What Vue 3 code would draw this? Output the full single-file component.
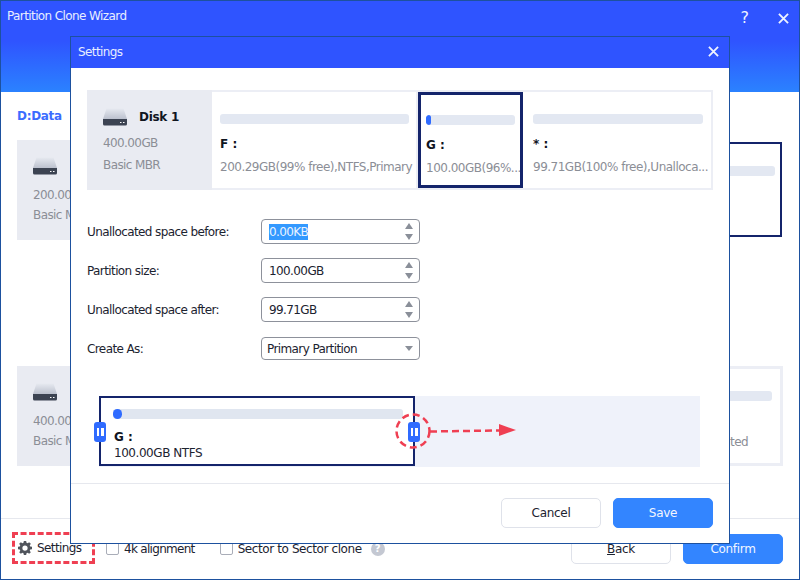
<script setup>
const fields = [
  { label: 'Unallocated space before:', value: '0.00KB', selected: true },
  { label: 'Partition size:', value: '100.00GB' },
  { label: 'Unallocated space after:', value: '99.71GB' },
]
</script>

<template>
  <div class="app">
    <header class="app-head">
      <span class="app-title">Partition Clone Wizard</span>
      <span class="head-icons">
        <span class="help">?</span>
        <svg class="x" width="11" height="11" viewBox="0 0 12 12"><path d="M1 1l10 10M11 1L1 11" /></svg>
      </span>
    </header>
    <main class="app-body">
      <div class="crumb">D:Data</div>
      <div class="bg-row first">
        <div class="bg-disk">
          <svg class="hdd" width="24" height="18" viewBox="0 0 24 18"><use href="#hdd-shape" /></svg>
          <div class="muted size">200.00GB</div>
          <div class="muted kind">Basic MBR</div>
        </div>
        <div class="bg-selected"><div class="bg-bar"></div></div>
      </div>
      <div class="bg-row second">
        <div class="bg-disk">
          <svg class="hdd" width="24" height="18" viewBox="0 0 24 18"><use href="#hdd-shape" /></svg>
          <div class="muted size">400.00GB</div>
          <div class="muted kind">Basic MBR</div>
        </div>
        <div class="bg-plain">
          <div class="bg-bar"></div>
          <div class="muted bg-tail">Unallocated</div>
        </div>
      </div>
    </main>
    <footer class="app-foot">
      <div class="settings-link">
        <svg width="14" height="14" viewBox="0 0 24 24"><path fill="#50545c" fill-rule="evenodd" d="M10 1h4l.6 3.1 1.9.8L19.1 3 22 5.900l-1.900 2.600.8 1.900L24 11v4l-3.100.6-.8 1.900 1.900 2.600L19.100 23l-2.600-1.900-1.900.8L14 25h-4l-.6-3.100-1.900-.8L4.900 23 2 20.100l1.900-2.600-.8-1.900L0 15v-4l3.100-.6.8-1.900L2 5.900 4.900 3l2.600 1.900 1.900-.8zM12 8.500a4.500 4.500 0 1 0 0 9 4.500 4.500 0 0 0 0-9z" transform="translate(0 -1)"/></svg>
        <span>Settings</span>
      </div>
      <label class="check"><i></i>4k alignment</label>
      <label class="check sector"><i></i>Sector to Sector clone</label>
      <span class="q">?</span>
      <span class="grow"></span>
      <button class="btn"><u>B</u>ack</button>
      <button class="btn primary">Confirm</button>
    </footer>

    <section class="dialog">
      <header class="dlg-head">
        <span>Settings</span>
        <svg class="x" width="11" height="11" viewBox="0 0 12 12"><path d="M1 1l10 10M11 1L1 11" /></svg>
      </header>
      <div class="dlg-body">
        <div class="disk-row">
          <div class="disk-info">
            <div class="disk-name">
              <svg width="24" height="18" viewBox="0 0 24 18">
                <defs>
                  <linearGradient id="hdd-top" x1="0" y1="0" x2="0" y2="1">
                    <stop offset="0" stop-color="#e6e9f0" />
                    <stop offset="1" stop-color="#bcc1ce" />
                  </linearGradient>
                </defs>
                <g id="hdd-shape">
                  <path d="M3.500 0.500h17L24 11H0z" fill="url(#hdd-top)" />
                  <path d="M0 11h24v5a1.500 1.500 0 0 1-1.500 1.500h-21A1.500 1.500 0 0 1 0 16z" fill="#3c4352" />
                  <path d="M17 14h1.500v1H17zM20 14h1.500v1H20z" fill="#fff" />
                </g>
              </svg>
              <b>Disk 1</b>
            </div>
            <div class="muted info-size">400.00GB</div>
            <div class="muted info-kind">Basic MBR</div>
          </div>
          <div class="cell f">
            <div class="bar"></div>
            <b class="letter">F :</b>
            <div class="muted desc">200.29GB(99% free),NTFS,Primary</div>
          </div>
          <div class="cell g">
            <div class="bar"><span class="fill"></span></div>
            <b class="letter">G :</b>
            <div class="muted desc">100.00GB(96%...</div>
          </div>
          <div class="cell u">
            <div class="bar"></div>
            <b class="letter">* :</b>
            <div class="muted desc">99.71GB(100% free),Unalloca...</div>
          </div>
        </div>

        <div class="form">
          <div v-for="f in fields" :key="f.label" class="form-row">
            <span class="form-label">{{ f.label }}</span>
            <div class="spin">
              <span :class="{ sel: f.selected }">{{ f.value }}</span>
              <span class="arrows"><i class="up"></i><i class="down"></i></span>
            </div>
          </div>
          <div class="form-row last">
            <span class="form-label">Create As:</span>
            <div class="select">
              <span>Primary Partition</span>
              <i class="down small"></i>
            </div>
          </div>
        </div>

        <div class="slider">
          <div class="part">
            <span class="grip left"><i></i><i></i></span>
            <div class="part-bar"><span class="part-fill"></span></div>
            <b class="part-letter">G :</b>
            <div class="part-text">100.00GB NTFS</div>
            <span class="grip right"><i></i><i></i></span>
          </div>
          <svg class="annot" width="130" height="50" viewBox="0 0 130 50">
            <circle cx="25" cy="25" r="16.500" />
            <path d="M42 25.500L112 24.500" />
            <polygon points="111,18 128,24 111,30" />
          </svg>
        </div>
      </div>
      <footer class="dlg-foot">
        <button class="btn">Cancel</button>
        <button class="btn primary">Save</button>
      </footer>
    </section>
  </div>
</template>

<style>
html, body { margin: 0; background: #fff; }
</style>

<style scoped>
.app {
  position: relative;
  width: 800px;
  height: 580px;
  box-sizing: border-box;
  border: 1px solid #1d519f;
  display: flex;
  flex-direction: column;
  overflow: hidden;
  background: #fff;
  color: #1c2330;
  font: 12px/16px "DejaVu Sans", sans-serif;
  letter-spacing: -0.6px;
}
b { font-weight: 700; }
.muted { color: #8b8e96; }
.x path { stroke: #eef3ff; stroke-width: 2; fill: none; }

.app-head {
  height: 91px;
  flex: none;
  box-sizing: border-box;
  padding: 7px 10px 0 6px;
  display: flex;
  justify-content: space-between;
  align-items: flex-start;
  background: linear-gradient(#2f54ff 0, #2f54ff 40px, #2b82ff 91px);
  color: #e8eeff;
}
.head-icons { display: flex; align-items: center; gap: 29px; margin-top: 2px; }
.help { font-size: 16px; color: #eef3ff; letter-spacing: 0; }

.app-body { flex: 1; padding: 0 16px; position: relative; }
.crumb { color: #3b6cff; font-weight: 700; margin-top: 16px; height: 32px; letter-spacing: -0.3px; }
.bg-row {
  height: 100px;
  display: flex;
  justify-content: space-between;
  box-sizing: border-box;
  background: #fff;
}
.second { margin-top: 126px; }
.bg-disk {
  width: 125px;
  background: #e9ebf2;
  padding: 17px 0 0 16px;
  box-sizing: border-box;
}
.hdd { display: block; }
.size { margin-top: 12px; }
.kind { margin-top: 4px; }
.bg-selected {
  width: 140px;
  height: 95px;
  margin: 2px 1px 0 0;
  box-sizing: border-box;
  border: 2px solid #14246b;
  padding: 22px 5px 0 10px;
}
.bg-plain {
  width: 140px;
  box-sizing: border-box;
  border: 3px solid #eceef5;
  padding: 22px 8px 0 10px;
  display: flex;
  flex-direction: column;
  align-items: flex-end;
}
.bg-bar { height: 10px; width: 100%; background: #e3e8f2; border-radius: 3px; }
.bg-tail { margin-top: 33px; margin-right: 24px; }

.app-foot {
  height: 61px;
  flex: none;
  box-sizing: border-box;
  border-top: 1px solid #e6e8ee;
  display: flex;
  align-items: center;
  padding: 0 16px 0 11px;
}
.settings-link {
  width: 83px;
  height: 32px;
  box-sizing: border-box;
  border: 3px dashed #ef3f52;
  display: flex;
  align-items: center;
  gap: 5px;
  padding-left: 3px;
  margin: -2px 11px 0 0;
}
.check { display: flex; align-items: center; gap: 5px; margin: -1px 25px 0 0; letter-spacing: -0.7px; }
.check i {
  width: 13px;
  height: 13px;
  box-sizing: border-box;
  border: 1px solid #a9adb8;
  border-radius: 2px;
}
.check.sector { margin-right: 9px; letter-spacing: -0.4px; }
.q {
  width: 14px;
  height: 14px;
  border-radius: 50%;
  background: #c4c8d2;
  color: #fff;
  font-size: 10px;
  font-weight: 700;
  line-height: 14px;
  text-align: center;
  letter-spacing: 0;
}
.grow { flex: 1; }
.btn {
  width: 100px;
  height: 30px;
  font: inherit;
  letter-spacing: -0.3px;
  color: #1c2330;
  background: #fff;
  border: 1px solid #dfe2ea;
  border-radius: 5px;
  margin: 0 0 0 12px;
  padding: 0;
}
.btn.primary { background: #3385ff; border-color: #3385ff; color: #f2f6ff; }

.dialog {
  position: absolute;
  left: 69px;
  top: 35px;
  width: 660px;
  height: 508px;
  box-sizing: border-box;
  border: 1px solid #1d519f;
  background: #fff;
  display: flex;
  flex-direction: column;
}
.dlg-head {
  height: 31px;
  flex: none;
  background: #2f54ff;
  color: #e8eeff;
  display: flex;
  justify-content: space-between;
  align-items: center;
  padding: 0 10px 2px 7px;
  box-sizing: border-box;
}
.dlg-body { flex: 1; padding: 22px 16px 0; box-sizing: border-box; }
.disk-row {
  height: 100px;
  display: flex;
  box-sizing: border-box;
  border: 2px solid #eceef5;
  border-left: 0;
}
.disk-info {
  width: 125px;
  flex: none;
  margin: -2px 0;
  background: #e9ebf2;
  padding: 18px 0 0 16px;
  box-sizing: border-box;
}
.disk-name { display: flex; align-items: center; gap: 12px; }
.disk-name b { color: #10151f; letter-spacing: -0.3px; }
.info-size { margin-top: 9px; }
.info-kind { margin-top: 6px; }
.cell {
  box-sizing: border-box;
  padding: 22px 0 0 8px;
  white-space: nowrap;
  overflow: hidden;
}
.f { width: 206px; border-right: 2px solid #eceef5; }
.g {
  width: 105px;
  border: 3px solid #14246b;
  margin: 0;
  padding: 20px 0 0 5px;
}
.u { flex: 1; padding-left: 10px; padding-right: 0; }
.bar {
  height: 10px;
  background: #e3e8f2;
  border-radius: 3px;
  overflow: hidden;
  margin-right: 7px;
}
.g .bar { margin-right: 5px; }
.u .bar { margin-right: 8px; }
.fill { display: block; width: 5px; height: 10px; background: #2f6bff; border-radius: 3px; }
.letter { display: block; margin-top: 12px; color: #10151f; letter-spacing: 0; }
.desc { margin-top: 7px; letter-spacing: -0.5px; }

.form { margin-top: 29px; }
.form-row { display: flex; align-items: center; height: 25px; margin-bottom: 14px; }
.form-row.last { margin-bottom: 0; margin-top: 15px; height: 23px; }
.form-label { width: 174px; flex: none; }
.spin, .select {
  width: 159px;
  height: 100%;
  box-sizing: border-box;
  border: 1px solid #8d919b;
  border-radius: 4px;
  display: flex;
  align-items: center;
  justify-content: space-between;
  padding: 0 6px 0 7px;
}
.select { padding: 0 6px 0 5px; }
.sel { background: #3399ff; color: #eaf3ff; }
.arrows { display: flex; flex-direction: column; gap: 5px; }
.up, .down { display: block; width: 0; height: 0; border-left: 4.500px solid transparent; border-right: 4.500px solid transparent; }
.up { border-bottom: 6px solid #8a8f99; }
.down { border-top: 6px solid #8a8f99; }
.down.small { border-left-width: 4px; border-right-width: 4px; border-top-width: 5px; }

.slider {
  position: relative;
  margin: 36px 13px 0 12px;
  height: 71px;
  background: #eff2fa;
}
.part {
  position: relative;
  width: 316px;
  height: 70px;
  box-sizing: border-box;
  border: 2px solid #14246b;
  background: #fff;
  padding: 11px 10px 0 12px;
  font-weight: 400;
}
.part-bar { height: 10px; background: #e0e6f0; border-radius: 3px; }
.part-fill { display: block; width: 9px; height: 10px; background: #2f6bff; border-radius: 5px; }
.part-letter { display: block; margin: 10px 0 0 1px; color: #10151f; letter-spacing: 0; }
.part-text { margin: 0 0 0 1px; letter-spacing: -0.45px; }
.grip {
  position: absolute;
  top: 24px;
  width: 12px;
  height: 20px;
  border-radius: 3px;
  background: #2f6bff;
  display: flex;
  justify-content: center;
  align-items: center;
  gap: 2px;
}
.grip i { width: 2.500px; height: 8px; background: #fff; }
.left { left: -7px; }
.right { right: -7px; }
.annot { position: absolute; left: 289px; top: 10px; overflow: visible; }
.annot circle, .annot path { fill: none; stroke: #ef3f52; stroke-width: 2.500; stroke-dasharray: 7 4; }
.annot polygon { fill: #ef3f52; }

.dlg-foot {
  height: 60px;
  flex: none;
  box-sizing: border-box;
  border-top: 1px solid #e6e8ee;
  display: flex;
  justify-content: flex-end;
  align-items: center;
  padding: 0 16px 2px 0;
}
</style>
